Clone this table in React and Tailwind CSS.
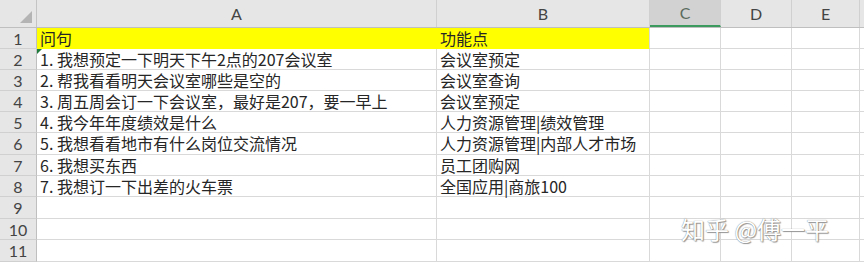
import React from "react";

const cols = [
  { key: "A", w: "w-[400px]" },
  { key: "B", w: "w-[213px]" },
  { key: "C", w: "w-[71px]" },
  { key: "D", w: "w-[71px]" },
  { key: "E", w: "w-[68px]" },
];

const data = [
  ["问句", "功能点"],
  ["1. 我想预定一下明天下午2点的207会议室", "会议室预定"],
  ["2. 帮我看看明天会议室哪些是空的", "会议室查询"],
  ["3. 周五周会订一下会议室，最好是207，要一早上", "会议室预定"],
  ["4. 我今年年度绩效是什么", "人力资源管理|绩效管理"],
  ["5. 我想看看地市有什么岗位交流情况", "人力资源管理|内部人才市场"],
  ["6. 我想买东西", "员工团购网"],
  ["7. 我想订一下出差的火车票", "全国应用|商旅100"],
  ["", ""],
  ["", ""],
  ["", ""],
];

const heights = [
  "h-[21px]", "h-[21px]", "h-[21px]", "h-[21px]", "h-[21px]", "h-[22px]",
  "h-[21px]", "h-[21px]", "h-[22px]", "h-[21px]", "h-[22px]",
];

export default function App() {
  return (
    <div className="relative w-[864px] h-[262px] overflow-hidden bg-white font-['Noto_Sans_CJK_SC',sans-serif] text-[16px] text-[#262626]">
      {/* header row */}
      <div className="flex h-[28px] bg-[#e6e6e6] border-b border-[#bfbfbf]">
        <div className="relative w-[37px] shrink-0 border-r border-[#c4c4c4]">
          <svg className="absolute right-[4px] bottom-[4px]" width="12" height="12" viewBox="0 0 12 12">
            <polygon points="12,0 12,12 0,12" fill="#b4b4b4" />
          </svg>
        </div>
        {cols.map((c) => (
          <div
            key={c.key}
            className={`${c.w} shrink-0 flex items-center justify-center border-r border-[#d0d0d0] font-['Lato',sans-serif] text-[16px] ${
              c.key === "C"
                ? "bg-[#d2d2d2] text-[#5a6b5e] border-b-2 border-b-[#3c9a5f]"
                : "text-[#444]"
            }`}
          >
            {c.key}
          </div>
        ))}
        <div className="flex-1" />
      </div>
      {/* body rows */}
      {data.map((row, i) => (
        <div key={i} className={`flex ${heights[i]}`}>
          <div className="w-[37px] shrink-0 bg-[#e6e6e6] border-r border-[#bfbfbf] border-b border-b-[#d0d0d0] flex items-center justify-center font-['Lato',sans-serif] text-[16px] leading-[19px] text-[#444]">
            {i + 1}
          </div>
          {cols.map((c, j) => {
            const yellow = i === 0 && j < 2;
            const text = j < 2 ? row[j] : "";
            return (
              <div
                key={c.key}
                className={`relative ${c.w} shrink-0 border-b flex items-center pl-[3px] leading-[19px] whitespace-nowrap ${
                  yellow
                    ? "bg-[#ffff00] border-[#ffff00]"
                    : "border-[#d9d9d9] border-r"
                } ${i === 0 && j === 1 ? "border-r border-r-[#d9d9d9]" : ""}`}
              >
                {i === 1 && j === 0 && (
                  <svg className="absolute left-0 top-0" width="5" height="5" viewBox="0 0 5 5">
                    <polygon points="0,0 5,0 0,5" fill="#1e7b3c" />
                  </svg>
                )}
                {text}
              </div>
            );
          })}
          <div className="flex-1 border-b border-[#d9d9d9]" />
        </div>
      ))}
      <div className="absolute left-[681px] top-[216px] text-[24px] leading-[26px] text-white font-['Noto_Sans_CJK_SC',sans-serif] [text-shadow:0_0_1px_#666,1px_1px_1px_#999] whitespace-nowrap">
        知乎 @傅一平
      </div>
    </div>
  );
}
